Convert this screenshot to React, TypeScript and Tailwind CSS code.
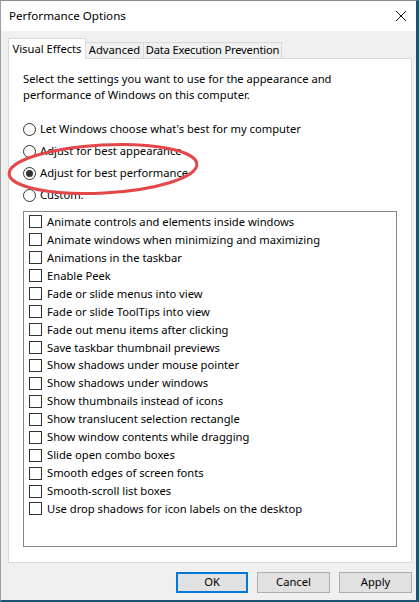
import React, { useState } from "react";

const effects = [
  "Animate controls and elements inside windows",
  "Animate windows when minimizing and maximizing",
  "Animations in the taskbar",
  "Enable Peek",
  "Fade or slide menus into view",
  "Fade or slide ToolTips into view",
  "Fade out menu items after clicking",
  "Save taskbar thumbnail previews",
  "Show shadows under mouse pointer",
  "Show shadows under windows",
  "Show thumbnails instead of icons",
  "Show translucent selection rectangle",
  "Show window contents while dragging",
  "Slide open combo boxes",
  "Smooth edges of screen fonts",
  "Smooth-scroll list boxes",
  "Use drop shadows for icon labels on the desktop",
];

const modes = [
  "Let Windows choose what's best for my computer",
  "Adjust for best appearance",
  "Adjust for best performance",
  "Custom:",
];

function Radio({ label, checked, onClick }: { label: string; checked: boolean; onClick: () => void }) {
  return (
    <div className="h-[22px] flex items-center cursor-default" onClick={onClick}>
      <span className="w-[13px] h-[13px] rounded-full border border-[#333] bg-white flex items-center justify-center">
        {checked && <span className="w-[7px] h-[7px] rounded-full bg-[#333]" />}
      </span>
      <span className="ml-[4px]">{label}</span>
    </div>
  );
}

function Check({ label }: { label: string }) {
  return (
    <div className="h-[17.94px] flex items-center">
      <span className="w-[13px] h-[13px] border border-[#333] bg-white" />
      <span className="ml-[5px]">{label}</span>
    </div>
  );
}

export default function App() {
  const [mode, setMode] = useState(2);

  return (
    <div
      className="relative w-[419px] h-[602px] bg-[#f0f0f0] border-l border-l-[#a0a0a0] border-t border-t-[#8a8a8a] border-r-[3px] border-r-[#1d5473] border-b-[2px] border-b-[#1d5473] flex flex-col text-[11.2px] text-black overflow-hidden"
      style={{ fontFamily: '"Noto Sans", "Open Sans", sans-serif' }}
    >
      {/* title bar */}
      <div className="h-[30px] bg-white flex items-center justify-between pl-[8px] pr-[6px] shrink-0">
        <span className="text-[11.6px]">Performance Options</span>
        <svg width="12" height="12" viewBox="0 0 12 12" className="mr-[3px]">
          <path d="M1 1 L11 11 M11 1 L1 11" stroke="#111" strokeWidth="1" />
        </svg>
      </div>

      <div className="pl-[7px] pr-[4px] pt-[7px] flex flex-col">
        {/* tabs */}
        <div className="flex items-end h-[20px] relative z-10 whitespace-nowrap">
          <div className="w-[78px] h-[21px] bg-white border border-[#d9d9d9] border-b-0 flex items-center justify-center -mb-px">
            Visual Effects
          </div>
          <div className="w-[58px] h-[16px] bg-[#f0f0f0] border border-[#d9d9d9] border-b-0 border-l-0 flex items-center justify-center">
            Advanced
          </div>
          <div className="w-[138px] h-[16px] bg-[#f0f0f0] border border-[#d9d9d9] border-b-0 border-l-0 flex items-center justify-center tracking-[-0.2px]">
            Data Execution Prevention
          </div>
        </div>

        {/* panel */}
        <div className="h-[505px] bg-white border border-[#d9d9d9] px-[14px] pt-[12px] flex flex-col leading-[16px]">
          <p>
            Select the settings you want to use for the appearance and
            <br />
            performance of Windows on this computer.
          </p>

          <div className="mt-[15px] flex flex-col">
            {modes.map((m, i) => (
              <Radio key={m} label={m} checked={mode === i} onClick={() => setMode(i)} />
            ))}
          </div>

          <div className="mt-[5px] h-[336px] border border-[#828790] pl-[5px] pt-[1px] flex flex-col">
            {effects.map((e) => (
              <Check key={e} label={e} />
            ))}
          </div>
        </div>

        {/* buttons */}
        <div className="flex justify-end gap-[9px] mt-[9px]">
          <button className="w-[72px] h-[21px] bg-[#e1e1e1] border-2 border-[#0078d7]">OK</button>
          <button className="w-[73px] h-[21px] bg-[#e1e1e1] border border-[#adadad]">Cancel</button>
          <button className="w-[73px] h-[21px] bg-[#e1e1e1] border border-[#adadad]">Apply</button>
        </div>
      </div>

      {/* red highlight drawn over the dialog */}
      <svg className="absolute left-0 top-0 pointer-events-none" width="419" height="602">
        <ellipse
          cx="102"
          cy="168"
          rx="94"
          ry="24"
          fill="none"
          stroke="#e4474a"
          strokeWidth="3"
          transform="rotate(-3 102 168)"
        />
      </svg>
    </div>
  );
}
